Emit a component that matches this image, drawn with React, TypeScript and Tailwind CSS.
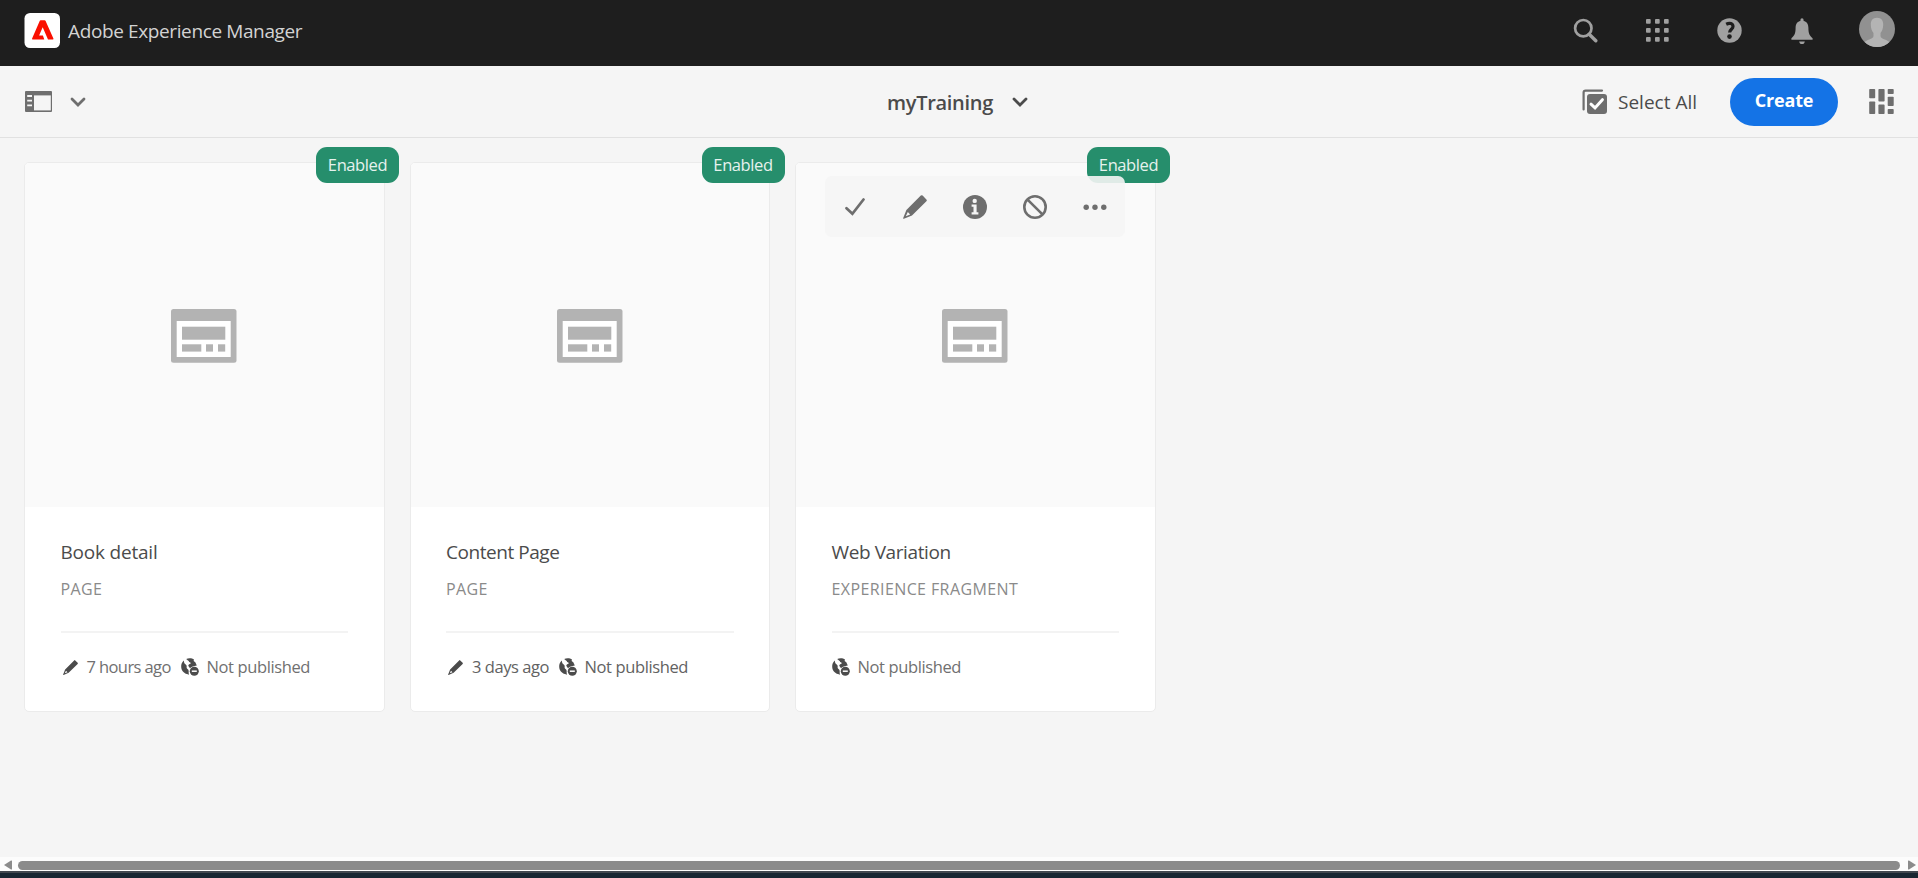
import type { ReactNode } from 'react';

type CardData = {
  title: string;
  kind: string;
  modified?: string;
  modifiedClass?: string;
  titleClass: string;
  metaClass: string;
  actions?: boolean;
};

const cards: CardData[] = [
  {
    title: 'Book detail',
    kind: 'PAGE',
    modified: '7 hours ago',
    modifiedClass: 'w-[94px] tracking-[-0.6px]',
    titleClass: 'tracking-[-0.2px]',
    metaClass: 'text-[#707070]',
  },
  {
    title: 'Content Page',
    kind: 'PAGE',
    modified: '3 days ago',
    modifiedClass: 'w-[86.5px] tracking-[-0.45px]',
    titleClass: 'tracking-[-0.45px]',
    metaClass: 'text-[#626262]',
  },
  {
    title: 'Web Variation',
    kind: 'EXPERIENCE FRAGMENT',
    titleClass: 'tracking-[-0.4px]',
    metaClass: 'text-[#707070]',
    actions: true,
  },
];

function AdobeLogo() {
  return (
    <svg className="size-9 shrink-0" viewBox="0 0 36 36">
      <rect x="0.5" y="0" width="35.5" height="35" rx="5.5" fill="#fff" />
      <path
        fillRule="evenodd"
        fill="#fa0f00"
        d="M16.6 7.2h4q.6 0 .9.6l7.9 17.7q.4.9-.6.9H8.7q-1 0-.6-.9L15.8 7.8q.2-.6.8-.6zM18.7 14.2l-3.6 8.4h3.8l1.4 3.8h3.7z"
      />
    </svg>
  );
}

function SearchIcon() {
  return (
    <svg className="size-[25px]" viewBox="0 0 25 25" fill="none" stroke="#a0a0a0">
      <circle cx="10.3" cy="10.2" r="8.2" strokeWidth="2.7" />
      <path d="M16.2 16.2L22.8 22.8" strokeWidth="3.4" strokeLinecap="round" />
    </svg>
  );
}

function AppsIcon() {
  return (
    <svg className="size-[25px]" viewBox="0 0 25 25" fill="#a0a0a0">
      {[1, 10, 19].map((y) =>
        [1, 10, 19].map((x) => <rect key={`${x}-${y}`} x={x} y={y} width="4.7" height="4.7" rx="0.9" />),
      )}
    </svg>
  );
}

function HelpIcon() {
  return (
    <svg className="size-[25px]" viewBox="0 0 25 25">
      <circle cx="12.5" cy="12.5" r="12.2" fill="#a0a0a0" />
      <path
        d="M9.2 6.2C12.8 4.4 16 5.4 16 8.5C16 11.200 12.600 11.400 12.600 14.600"
        fill="none"
        stroke="#1e1e1e"
        strokeWidth="3.200"
      />
      <circle cx="12.5" cy="18.6" r="2.3" fill="#1e1e1e" />
    </svg>
  );
}

function BellIcon() {
  return (
    <svg className="size-[26px]" viewBox="0 0 26 26" fill="#a0a0a0">
      <path d="M11.4 2Q11.4.3 13 .3T14.6 2v.9C18.2 3.6 19.4 6.4 19.4 9.8C19.4 15.6 20.6 17.8 23.6 20.2V21.800H2.4V20.2C5.4 17.8 6.600 15.6 6.600 9.8C6.600 6.4 7.8 3.6 11.4 2.9z" />
      <path d="M10.2 23.4h5.6C15.6 25 14.6 26 13 26S10.4 25 10.2 23.4z" />
    </svg>
  );
}

function Avatar() {
  return (
    <svg className="size-9" viewBox="0 0 36 36">
      <clipPath id="avatar-clip">
        <circle cx="18" cy="18" r="18" />
      </clipPath>
      <g clipPath="url(#avatar-clip)">
        <rect width="36" height="36" fill="#919191" />
        <path
          fill="#b4b4b4"
          d="M18 6.8c4.4 0 6.4 3 6.2 7.2-.1 3.600-1.200 6.200-2.700 8v2.700c0 1.800 1.200 2.600 3.600 3.500 3 1.100 4.900 2 6.200 3.800V38H4.700V32c1.300-1.800 3.200-2.700 6.200-3.800 2.400-.9 3.600-1.700 3.600-3.500V22c-1.500-1.800-2.600-4.400-2.700-8-.2-4.200 1.800-7.200 6.200-7.200z"
        />
      </g>
    </svg>
  );
}

function RailIcon() {
  return (
    <svg className="h-[21px] w-[27px]" viewBox="0 0 27 21">
      <rect width="27" height="21" rx="1" fill="#6e6e6e" />
      <rect x="9" y="4.4" width="16.8" height="15" fill="#f5f5f5" />
      <path d="M2.2 5h4.800M2.200 9.700h4.800M2.200 14.400h4.800" stroke="#f5f5f5" strokeWidth="1.8" />
    </svg>
  );
}

function Chevron({ className }: { className: string }) {
  return (
    <svg className={className} viewBox="0 0 16 10" fill="none" stroke="currentColor">
      <path d="M2 2L8 8L14 2" strokeWidth="2.8" strokeLinecap="round" />
    </svg>
  );
}

function SelectAllIcon() {
  return (
    <svg className="size-[26px]" viewBox="0 0 26 26">
      <path d="M1.600 20.500V3.600Q1.600 1.600 3.600 1.600H20" fill="none" stroke="#6e6e6e" strokeWidth="2.200" strokeLinecap="round" />
      <rect x="5" y="5" width="20" height="20" rx="3" fill="#6e6e6e" />
      <path d="M9 15.200L13 18.900L20.400 10.700" fill="none" stroke="#fff" strokeWidth="3" strokeLinecap="round" />
    </svg>
  );
}

function ColumnsIcon() {
  return (
    <svg className="size-[25px]" viewBox="0 0 25 25" fill="#6e6e6e">
      <rect x="0.2" y="0" width="6" height="9.3" rx="0.8" />
      <rect x="0.2" y="12.4" width="6" height="12.6" rx="0.8" />
      <rect x="9.4" y="0" width="6.2" height="12.6" rx="0.8" />
      <rect x="9.4" y="15.6" width="6.2" height="9.4" rx="0.8" />
      <rect x="18.7" y="0" width="6" height="5" rx="0.8" />
      <rect x="18.7" y="7.8" width="6" height="9.2" rx="0.8" />
      <rect x="18.7" y="20" width="6" height="5" rx="0.8" />
    </svg>
  );
}

function PreviewIcon() {
  return (
    <svg className="h-[54px] w-[66px]" viewBox="0 0 66 54">
      <rect width="65.5" height="53.7" rx="2.5" fill="#b3b3b3" />
      <rect x="5.7" y="12" width="54" height="36" fill="#fff" />
      <g fill="#b3b3b3">
        <rect x="11" y="17.7" width="43.3" height="13" />
        <rect x="11" y="35.3" width="19.3" height="7.3" />
        <rect x="35" y="35.3" width="7" height="7.3" />
        <rect x="47" y="35.3" width="7.2" height="7.3" />
      </g>
    </svg>
  );
}

function PencilIcon({ className }: { className: string }) {
  return (
    <svg className={className} viewBox="0 0 24 24">
      <path
        fill="currentColor"
        fillRule="evenodd"
        d="M17.800.6q.9-.9 1.800 0l3.800 3.800q.9.9 0 1.800L9 20.400.9 23.800q-.9.2-.7-.7L3.400 15zM4.800 17L2.800 21.300 7.200 19.400z"
      />
    </svg>
  );
}

function CheckIcon() {
  return (
    <svg className="h-[18px] w-5" viewBox="0 0 20 18" fill="none" stroke="#6e6e6e">
      <path d="M1.500 10.200L7.400 15.800L18.500 1.500" strokeWidth="2.700" strokeLinecap="round" />
    </svg>
  );
}

function InfoIcon() {
  return (
    <svg className="size-6" viewBox="0 0 24 24">
      <circle cx="12" cy="12" r="12" fill="#6e6e6e" />
      <circle cx="11.700" cy="5.900" r="2.200" fill="#f5f5f5" />
      <path fill="#f5f5f5" d="M8.600 9.400h5v7.800h1.800v2.400H8.600v-2.400h1.900v-5.400H8.600z" />
    </svg>
  );
}

function BlockIcon() {
  return (
    <svg className="size-6" viewBox="0 0 24 24" fill="none" stroke="#6e6e6e" strokeWidth="2.6">
      <circle cx="12" cy="12" r="10.7" />
      <path d="M4.800 4.800L19.200 19.200" />
    </svg>
  );
}

function MoreIcon() {
  return (
    <svg className="size-6" viewBox="0 0 24 24" fill="#6e6e6e">
      <circle cx="3.200" cy="12.200" r="2.700" />
      <circle cx="12" cy="12.200" r="2.700" />
      <circle cx="20.800" cy="12.200" r="2.700" />
    </svg>
  );
}

function GlobeRemoveIcon() {
  return (
    <svg className="size-[18px] shrink-0" viewBox="0 0 18 18">
      <path fill="#4b4b4b" d="M3 2.500C1 4 0 6.200.2 9c.2 3.400 2.500 6.200 5.800 7.100L8 16.700C7.500 15.200 7.800 13.900 7.600 12.600 7.300 11.200 5.500 10.900 5.600 9.600 5.700 8.300 6 7.600 4.700 6.600 3.400 5.700 2.800 4.400 3 2.500z" />
      <path fill="#4b4b4b" d="M5.200 1.100C7.500 0 11 .1 13 1.600L12.600 3 14.300 4.200 15.800 7.400 13.500 8C11 8.300 9.600 9.800 9 10.300L7.400 8C6.800 6.800 8.600 6.400 9.700 5.600 10 4.400 8.900 4.400 8.100 3.900 8 2.500 6.200 2.600 5.200 1.100z" />
      <circle cx="13.300" cy="13.200" r="4.500" fill="#4b4b4b" />
      <path d="M10.800 13.200h5" stroke="#fff" strokeWidth="1.500" />
    </svg>
  );
}

function ActionButton({ label, children }: { label: string; children: ReactNode }) {
  return (
    <button aria-label={label} className="flex w-[60px] items-center justify-center text-[#6e6e6e]">
      {children}
    </button>
  );
}

function QuickActions() {
  return (
    <div className="absolute left-[29px] top-[13px] flex h-[61px] rounded-[7px] bg-[#f5f5f5]/90">
      <ActionButton label="Select"><CheckIcon /></ActionButton>
      <ActionButton label="Edit"><PencilIcon className="size-6" /></ActionButton>
      <ActionButton label="Properties"><InfoIcon /></ActionButton>
      <ActionButton label="Disable"><BlockIcon /></ActionButton>
      <ActionButton label="More"><MoreIcon /></ActionButton>
    </div>
  );
}

function Card({ card }: { card: CardData }) {
  return (
    <article className="relative h-[550px] w-[360.5px] rounded-[5px] border border-[#ebebeb] bg-white">
      <div className="flex h-[344px] items-center justify-center rounded-t-[4px] bg-[#fafafa] pt-[2px]">
        <PreviewIcon />
      </div>
      <div className="px-[35.5px] pt-[33px]">
        <h2 className={`text-[19px] leading-6 text-[#4b4b4b] ${card.titleClass}`}>{card.title}</h2>
        <p className="mt-[15px] text-base leading-5 tracking-[0.4px] text-[#8a8a8a]">{card.kind}</p>
        <div className="mt-8 h-[2px] bg-[#f3f3f3]" />
        <div className={`mt-[22px] flex h-6 items-center text-[16.5px] leading-6 ${card.metaClass}`}>
          {card.modified && (
            <>
              <PencilIcon className="ml-[2px] mr-[9px] size-[15px] shrink-0 text-[#4b4b4b]" />
              <span className={`shrink-0 whitespace-nowrap ${card.modifiedClass}`}>{card.modified}</span>
            </>
          )}
          <GlobeRemoveIcon />
          <span className="ml-2 whitespace-nowrap tracking-[-0.38px]">Not published</span>
        </div>
      </div>
      <span className="absolute -right-[15.5px] -top-[16px] flex h-9 w-[83px] items-center justify-center rounded-[11px] bg-[#268e6c] text-[16.5px] tracking-[-0.4px] text-[#e6f2ee]">
        Enabled
      </span>
      {card.actions && <QuickActions />}
    </article>
  );
}

export default function App() {
  return (
    <div className="flex h-[878px] w-[1918px] flex-col overflow-hidden bg-[#f5f5f5] font-['Open_Sans','Noto_Sans',sans-serif]">
      <header className="flex h-[66px] items-center justify-between bg-[#1e1e1e] pb-[5px] pl-6 pr-[23px]">
        <div className="flex items-center gap-2">
          <AdobeLogo />
          <span className="pt-[2px] text-[19px] tracking-[-0.38px] text-[#d3d3d3]">Adobe Experience Manager</span>
        </div>
        <div className="flex items-center">
          <div className="mr-[44.5px] flex items-center gap-[47px]">
            <SearchIcon />
            <AppsIcon />
            <HelpIcon />
            <BellIcon />
          </div>
          <div className="-mt-[3px]"><Avatar /></div>
        </div>
      </header>

      <div className="grid h-[72px] grid-cols-[1fr_auto_1fr] items-center border-b border-[#e1e1e1] px-6">
        <div className="flex items-center gap-[17.5px] pl-px">
          <RailIcon />
          <Chevron className="h-[10px] w-4 text-[#6e6e6e]" />
        </div>
        <div className="mr-[3px] flex items-center gap-[19px] pt-px text-[#4b4b4b]">
          <h1 className="pt-px text-[20px] font-semibold tracking-[-0.28px]">myTraining</h1>
          <Chevron className="h-[10px] w-4" />
        </div>
        <div className="flex items-center justify-end">
          <SelectAllIcon />
          <span className="ml-[10px] mr-px pt-[2px] text-[19px] text-[#4b4b4b]">Select All</span>
          <button className="ml-8 mr-[31px] h-12 w-[108px] rounded-full bg-[#1473e6] pb-[2px] text-[18px] font-bold tracking-[-0.2px] text-white">
            Create
          </button>
          <ColumnsIcon />
        </div>
      </div>

      <main className="flex flex-1 gap-[25px] pl-6 pt-6">
        {cards.map((card) => (
          <Card key={card.title} card={card} />
        ))}
      </main>

      <div className="flex h-[14px] items-center bg-[#fcfcfc] pl-1 pt-[2px]">
        <svg className="h-[10px] w-2 shrink-0" viewBox="0 0 8 10"><path d="M0 5L7 .5Q8 .2 8 1v8q0 .8-1 .5z" fill="#8b8b8b" /></svg>
        <div className="ml-[6px] mr-2 h-[9px] w-[1882px] shrink-0 rounded-full bg-[#8b8b8b]" />
        <svg className="h-[10px] w-2 shrink-0" viewBox="0 0 8 10"><path d="M8 5L1 .5Q0 .2 0 1v8q0 .8 1 .5z" fill="#8b8b8b" /></svg>
      </div>
      <div className="h-[7px] border-t-2 border-[#41474f] bg-[#182632]" />
    </div>
  );
}
